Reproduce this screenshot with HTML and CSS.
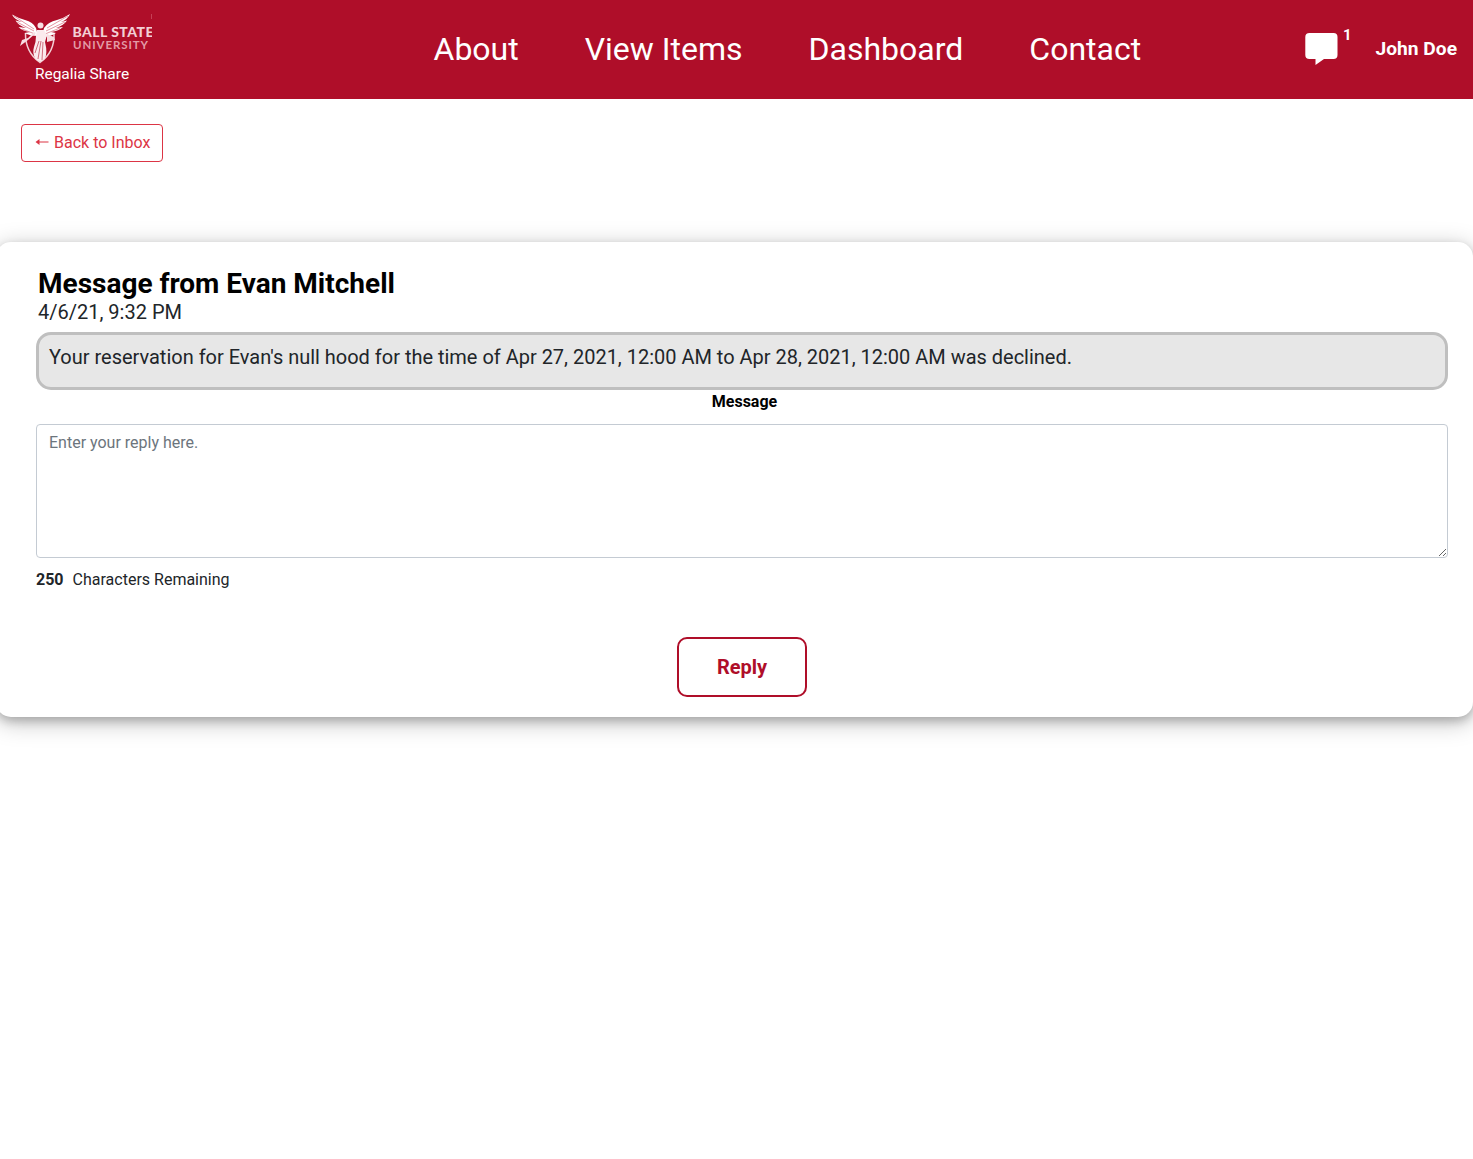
FILE: index.html
```html
<!DOCTYPE html>
<html lang="en">
<head>
<meta charset="utf-8">
<title>Regalia Share</title>
<link rel="stylesheet" href="styles.css">
</head>
<body>
<header class="navbar">
  <a class="brand">
    <svg class="logo" width="140" height="51" viewBox="12 13 140 51">
      <path d="M25.500 33 Q25 52 40 62.500 Q55 52 54 33" fill="none" stroke="#f3cfd5" stroke-width="1.500"/>
      <path d="M12 14.500 Q18 18 25 20 Q33 22 36 28 L38 36 Q30 36 24.500 33 L30 32 Q22 31 18.500 27 L26 28 Q18 25 15.500 20.500 L22 22 Q14 19 12 14.500Z" fill="#fff"/>
      <path d="M70 14 Q64 18 57 20 Q48 22 44 28 L42 37 Q50 37 56 33 L51 32 Q59 31 63 27 L56 28 Q64 25 67 20.500 L61 22 Q68 19 70 14Z" fill="#fff"/>
      <path d="M14 16 L34 29 M17 22 L34 31 M22 29 L35 34 M68 16 L47 28 M65 22 L46 31 M60 28 L45 34" stroke="#d96b7c" stroke-width=".7"/>
      <ellipse cx="40.500" cy="25.500" rx="3" ry="3" fill="#f8dfe3"/>
      <path d="M37 30 L44 30 L47 35 L45 42 Q48 54 44.500 59 L40 62 L35.500 59 Q32 53 34 47 Q36 42 36 36Z" fill="#fbeaed"/>
      <path d="M36 33 L28 40 L20 46 L22 40 L28 38 L34 32Z M47 34 L54 37 L55 40 L47 42Z" fill="#f8dfe3"/>
      <path d="M39 41 L35 53 M41 41 L38 59 M43 42 L42 60" stroke="#c44c60" stroke-width=".8"/>
      <path d="M151.600 14V19" stroke="#d96b7c" stroke-width=".6"/>
      <text class="logo-name" x="72.500" y="37.400" textLength="81">BALL STATE</text>
      <text class="logo-sub" x="73" y="49.300" textLength="75">UNIVERSITY</text>
    </svg>
    <span class="brand-label">Regalia Share</span>
  </a>
  <nav class="links"><a>About</a><a>View Items</a><a>Dashboard</a><a>Contact</a></nav>
  <div class="account">
    <svg class="chat" width="33" height="33" viewBox="0 0 33 33"><path d="M4.500 0H28.500Q32.500 0 32.500 4V22Q32.500 26 28.500 26H19L10.500 32V26H4.500Q.3 26 .3 22V4Q.3 0 4.500 0Z" fill="#fff"/></svg>
    <span class="count">1</span>
    <span class="user">John Doe</span>
  </div>
</header>
<main>
  <a class="back"><svg class="arrow" width="14" height="10" viewBox="0 0 14 10"><path d="M.5 5L4.500 2V4.400H13.500V5.600H4.500V8Z" fill="#dc3545"/></svg>Back to Inbox</a>
  <section class="card">
    <h1 class="title">Message from Evan Mitchell</h1>
    <p class="date">4/6/21, 9:32 PM</p>
    <div class="message">Your reservation for Evan's null hood for the time of Apr 27, 2021, 12:00 AM to Apr 28, 2021, 12:00 AM was declined.</div>
    <label class="reply-label" for="reply">Message</label>
    <textarea class="reply" id="reply" placeholder="Enter your reply here."></textarea>
    <p class="remaining"><b>250</b>Characters Remaining</p>
    <button class="submit">Reply</button>
  </section>
</main>
</body>
</html>
```
FILE: styles.css
```css
* { box-sizing: border-box; }
body {
  min-height: 100vh;
  margin: 0;
  background: #fff;
  color: #212529;
  font: 16px/24px Roboto, sans-serif;
}
.navbar {
  display: grid;
  grid-template-columns: 433.5px 1fr auto;
  height: 99px;
  background: #af0e29;
  color: #fff;
}
.brand {
  display: flex;
  flex-direction: column;
  align-items: center;
  width: 140px;
  margin: 13px 0 0 12px;
}
.logo { display: block; }
.logo text { fill: #f3cfd5; font-family: Lato, sans-serif; }
.logo-name { font-size: 14px; font-weight: 900; }
.logo .logo-sub { font-size: 11.5px; font-weight: 700; fill: #e39ba6; }
.brand-label { font-size: 15.5px; line-height: 20px; }
.links {
  display: flex;
  gap: 66px;
  font-size: 32px;
  line-height: 98px;
  white-space: nowrap;
}
.account { display: flex; padding-right: 16px; }
.chat { margin-top: 33px; }
.count { margin: 23px 24px 0 5px; font-size: 15px; font-weight: 700; }
.user {
  font-size: 19.2px;
  font-weight: 700;
  line-height: 97px;
}
.back {
  display: flex;
  align-items: center;
  gap: 5px;
  width: 142px;
  height: 38px;
  margin: 25px 0 80px 21px;
  padding: 0 0 1px 13px;
  border: 1px solid #dc3545;
  border-radius: 4px;
  color: #dc3545;
  white-space: nowrap;
}
.arrow { margin-bottom: 1px; }
.card {
  display: flex;
  flex-direction: column;
  height: 475px;
  margin-left: -4px;
  padding: 25px 25px 20px 40px;
  border-radius: 15px;
  background: #fff;
  box-shadow: 0 4px 10px rgba(0, 0, 0, .2), 0 5px 24px rgba(0, 0, 0, .26);
}
.title {
  margin: 0 0 0 2px;
  color: #000;
  font-size: 28px;
  font-weight: 700;
  line-height: 34px;
}
.date { margin: 0 0 8px 2px; font-size: 20px; line-height: 23px; }
.message {
  height: 58px;
  padding: 7px 10px;
  border: 3px solid #bfbfbf;
  border-radius: 15px;
  background: #e7e7e7;
  font-size: 19.98px;
  line-height: 30px;
}
.reply-label {
  margin-left: 5px;
  color: #000;
  font-weight: 700;
  text-align: center;
}
.reply {
  height: 134px;
  margin: 10px 0 0;
  padding: 6px 12px;
  border: 1px solid #c4cbd3;
  border-radius: 4px;
  font: inherit;
  resize: vertical;
}
.reply::placeholder { color: #6c757d; }
.remaining { display: flex; gap: 9px; margin: 10px 0 45px; }
.submit {
  align-self: center;
  width: 130px;
  height: 60px;
  padding: 0;
  border: 2px solid #af0e29;
  border-radius: 10px;
  background: #fff;
  color: #af0e29;
  font: 700 20px/30px Roboto, sans-serif;
}
```
